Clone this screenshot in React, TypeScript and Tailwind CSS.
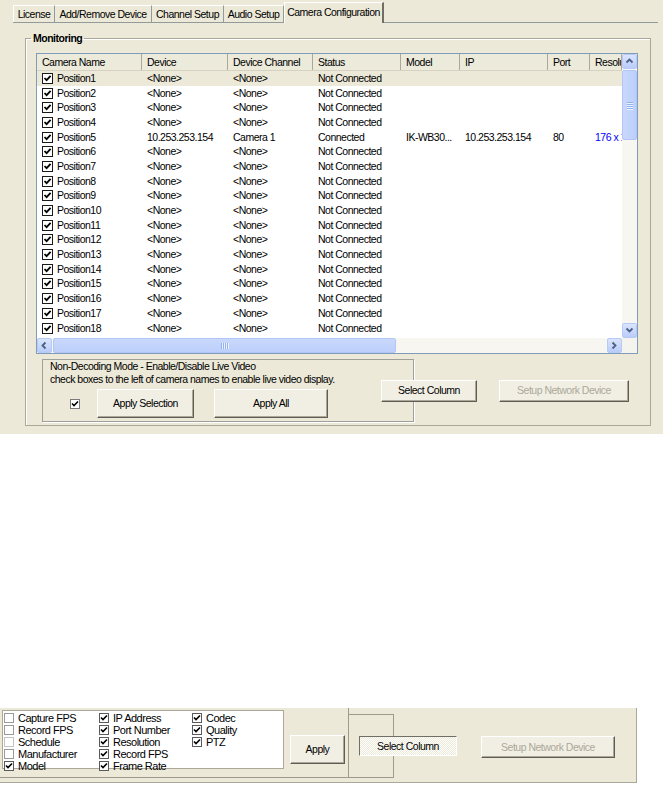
import React from 'react'

type Row = {
  name: string
  device: string
  channel: string
  status: string
  model?: string
  ip?: string
  port?: string
  res?: string
}

const rows: Row[] = Array.from({ length: 18 }, (_, i) =>
  i === 4
    ? {
        name: 'Position5',
        device: '10.253.253.154',
        channel: 'Camera 1',
        status: 'Connected',
        model: 'IK-WB30...',
        ip: '10.253.253.154',
        port: '80',
        res: '176 x 144',
      }
    : { name: `Position${i + 1}`, device: '<None>', channel: '<None>', status: 'Not Connected' }
)

const cols = [
  { label: 'Camera Name', w: 'w-[105px]' },
  { label: 'Device', w: 'w-[86px]' },
  { label: 'Device Channel', w: 'w-[85px]' },
  { label: 'Status', w: 'w-[88px]' },
  { label: 'Model', w: 'w-[59px]' },
  { label: 'IP', w: 'w-[88px]' },
  { label: 'Port', w: 'w-[42px]' },
  { label: 'Resolution', w: 'w-[32px]' },
]

function Check({ size = 'list' }: { size?: 'list' | 'flat' }) {
  if (size === 'flat') {
    return (
      <span className="flex h-[10px] w-[10px] items-center justify-center border border-[#7a7a7a] bg-white">
        <svg width="8" height="8" viewBox="0 0 8 8">
          <path d="M1 3.5 L3 5.5 L7 1.5" stroke="#000" strokeWidth="1.6" fill="none" />
        </svg>
      </span>
    )
  }
  return (
    <span className="flex h-[11px] w-[11px] shrink-0 items-center justify-center border border-[#1a1a1a] bg-white">
      <svg width="9" height="9" viewBox="0 0 9 9">
        <path d="M1.5 4 L3.6 6.2 L7.6 1.8" stroke="#000" strokeWidth="1.8" fill="none" />
      </svg>
    </span>
  )
}

function Chevron({ dir }: { dir: 'up' | 'down' | 'left' | 'right' }) {
  const d = {
    up: 'M1.5 5.5 L4.5 2.5 L7.5 5.5',
    down: 'M1.5 2.5 L4.5 5.5 L7.5 2.5',
    left: 'M5.5 1.5 L2.5 4.5 L5.5 7.5',
    right: 'M2.5 1.5 L5.5 4.5 L2.5 7.5',
  }[dir]
  return (
    <svg width="9" height="9" viewBox="0 0 9 9">
      <path d={d} stroke="#4d6185" strokeWidth="1.8" fill="none" />
    </svg>
  )
}

function ArrowBtn({ dir }: { dir: 'up' | 'down' | 'left' | 'right' }) {
  return (
    <div className="flex h-[15px] w-[15px] shrink-0 items-center justify-center rounded-[2px] border border-[#b7c9f5] bg-linear-to-b from-[#dae5fe] to-[#b9ccf9]">
      <Chevron dir={dir} />
    </div>
  )
}

function Grip({ vertical }: { vertical: boolean }) {
  return (
    <div className={vertical ? 'flex flex-col gap-px' : 'flex flex-row gap-px'}>
      {[0, 1, 2, 3].map((i) => (
        <span
          key={i}
          className={
            vertical
              ? 'block h-px w-[6px] bg-[#8fb0f3] shadow-[0_1px_0_#eef3fe]'
              : 'block h-[6px] w-px bg-[#8fb0f3] shadow-[1px_0_0_#eef3fe]'
          }
        />
      ))}
    </div>
  )
}

function Btn({
  children,
  className,
  disabled,
}: {
  children: React.ReactNode
  className: string
  disabled?: boolean
}) {
  return (
    <div
      className={`flex shrink-0 items-center justify-center border border-t-white border-l-white border-r-[#5e5c53] border-b-[#5e5c53] bg-[#f1efe4] shadow-[inset_-1px_-1px_0_#aca899] ${
        disabled ? 'text-[#aca899]' : 'text-black'
      } ${className}`}
    >
      {children}
    </div>
  )
}

function Tabs() {
  const tabs = [
    { t: 'License', w: 'w-[42px]' },
    { t: 'Add/Remove Device', w: 'w-[97px]' },
    { t: 'Channel Setup', w: 'w-[72px]' },
    { t: 'Audio Setup', w: 'w-[60px]' },
  ]
  return (
    <div className="ml-[13px] flex h-[23px] w-[645px] items-end border-b border-[#919b9c]">
      {tabs.map(({ t, w }, i) => (
        <div
          key={t}
          className={`flex h-[17px] ${w} shrink-0 items-start justify-center whitespace-nowrap border-t border-r border-t-white border-r-[#919b9c] pt-[2px] ${
            i === 0 ? 'border-l border-l-white' : ''
          }`}
        >
          {t}
        </div>
      ))}
      <div className="relative z-10 -mb-px flex h-[21px] w-[100px] shrink-0 items-start justify-center whitespace-nowrap border-t border-l border-r-2 border-t-white border-l-white border-r-[#716f64] bg-[#ece9d8] pt-[3px]">
        Camera Configuration
      </div>
    </div>
  )
}

function CameraList() {
  return (
    <div className="flex h-[301px] w-[602px] flex-col border border-[#7f9db9] bg-white">
      <div className="flex h-[284px]">
        <div className="flex w-[585px] flex-col overflow-hidden">
          <div className="flex h-[17px] shrink-0 border-b border-[#d6d2c2] bg-[#ebeadb]">
            {cols.map((c) => (
              <div
                key={c.label}
                className={`${c.w} shrink-0 overflow-hidden whitespace-nowrap border-r border-[#aca899] pl-[5px] pt-[2px]`}
              >
                {c.label}
              </div>
            ))}
          </div>
          <div className="flex-1 overflow-hidden">
            {rows.map((r, i) => (
              <div
                key={r.name}
                className={`flex h-[14.7px] items-center whitespace-nowrap ${i === 0 ? 'bg-[#ece9d8]' : ''}`}
              >
                <div className="flex w-[105px] shrink-0 items-center gap-[4px] pl-[5px]">
                  <Check />
                  <span>{r.name}</span>
                </div>
                <div className="w-[86px] shrink-0 pl-[5px]">{r.device}</div>
                <div className="w-[85px] shrink-0 pl-[5px]">{r.channel}</div>
                <div className="w-[88px] shrink-0 pl-[5px]">{r.status}</div>
                <div className="w-[59px] shrink-0 pl-[5px]">{r.model}</div>
                <div className="w-[88px] shrink-0 pl-[5px]">{r.ip}</div>
                <div className="w-[42px] shrink-0 pl-[5px]">{r.port}</div>
                <div className="w-[32px] shrink-0 overflow-hidden pl-[5px] text-[#0000ff]">{r.res}</div>
              </div>
            ))}
          </div>
        </div>
        <div className="flex w-[15px] flex-col bg-[#f7f6f1]">
          <ArrowBtn dir="up" />
          <div className="mt-px flex h-[70px] items-center justify-center rounded-[2px] border border-[#b1c5f6] bg-linear-to-r from-[#c9d8fc] to-[#bccffb]">
            <Grip vertical />
          </div>
          <div className="flex-1" />
          <ArrowBtn dir="down" />
        </div>
      </div>
      <div className="flex h-[15px]">
        <div className="flex w-[585px] bg-[#f7f6f1]">
          <ArrowBtn dir="left" />
          <div className="ml-px flex w-[343px] items-center justify-center rounded-[2px] border border-[#b1c5f6] bg-linear-to-b from-[#c9d8fc] to-[#bccffb]">
            <Grip vertical={false} />
          </div>
          <div className="flex-1" />
          <ArrowBtn dir="right" />
        </div>
        <div className="w-[15px] bg-[#f4f3ee]" />
      </div>
    </div>
  )
}

function Monitoring() {
  return (
    <fieldset className="ml-[25px] mt-[9px] h-[394px] w-[626px] border border-[#aca899] shadow-[inset_1px_1px_0_#fff]">
      <legend className="ml-[5px] px-[2px] font-bold">Monitoring</legend>
      <div className="ml-[10px] mt-[8px]">
        <CameraList />
        <div className="mt-[5px] flex items-center">
          <div className="ml-[6px] h-[63px] w-[372px] shrink-0 whitespace-nowrap border border-[#a0a09a] px-[7px] shadow-[1px_1px_0_#fff]">
            <div>Non-Decoding Mode - Enable/Disable Live Video</div>
            <div>check boxes to the left of camera names to enable live video display.</div>
            <div className="mt-[3px] flex items-center">
              <div className="ml-[20px]">
                <Check size="flat" />
              </div>
              <Btn className="ml-[17px] h-[29px] w-[97px]">Apply Selection</Btn>
              <Btn className="ml-[20px] h-[29px] w-[114px]">Apply All</Btn>
            </div>
          </div>
          <Btn className="relative -ml-[33px] h-[22px] w-[96px]">Select Column</Btn>
          <Btn className="ml-[22px] h-[22px] w-[130px]" disabled>
            Setup Network Device
          </Btn>
        </div>
      </div>
    </fieldset>
  )
}

function OptCheck({ label, checked, dim }: { label: string; checked: boolean; dim?: boolean }) {
  return (
    <div className="flex h-[12px] items-center gap-[4px] whitespace-nowrap">
      <span
        className={`flex h-[10px] w-[10px] shrink-0 items-center justify-center border bg-white ${
          checked ? 'border-[#5a5a5a]' : dim ? 'border-[#c4c4c4]' : 'border-[#9a9a9a]'
        }`}
      >
        {checked && (
          <svg width="8" height="8" viewBox="0 0 8 8">
            <path d="M1 3.5 L3 5.6 L7 1.5" stroke="#000" strokeWidth="1.6" fill="none" />
          </svg>
        )}
      </span>
      <span>{label}</span>
    </div>
  )
}

function ColumnPicker() {
  const c1: [string, boolean][] = [
    ['Capture FPS', false],
    ['Record FPS', false],
    ['Schedule', false],
    ['Manufacturer', false],
    ['Model', true],
  ]
  const c2 = ['IP Address', 'Port Number', 'Resolution', 'Record FPS', 'Frame Rate']
  const c3 = ['Codec', 'Quality', 'PTZ']
  return (
    <div className="flex h-[75px] w-[637px] border-r border-b border-[#aca899] bg-[#ece9d8]">
      <div className="flex h-[70px] w-[349px] shrink-0 items-start border-r border-b border-[#9d9a8c]">
        <div className="ml-[2px] mt-[2px] flex h-[59px] w-[282px] border border-[#aca899] bg-white pt-px text-[11px] tracking-[-0.5px]">
          <div className="ml-[1px] w-[95px]">
            {c1.map(([l, c]) => (
              <OptCheck key={l} label={l} checked={c} dim={l === 'Schedule'} />
            ))}
          </div>
          <div className="w-[93px]">
            {c2.map((l) => (
              <OptCheck key={l} label={l} checked />
            ))}
          </div>
          <div>
            {c3.map((l) => (
              <OptCheck key={l} label={l} checked />
            ))}
          </div>
        </div>
        <Btn className="ml-[6px] mt-[27px] h-[29px] w-[55px]">Apply</Btn>
      </div>
      <div className="mt-[6px] flex items-start">
        <div className="h-[64px] w-[45px] shrink-0 border-t border-r border-b border-[#9d9a8c]" />
        <div className="relative -ml-[35px] mt-[22px] flex h-[20px] w-[98px] items-center justify-center border border-t-[#716f64] border-l-[#716f64] border-r-white border-b-white bg-[repeating-conic-gradient(#ffffff_0_25%,#ece9d8_0_50%)] bg-size-[2px_2px]">
          Select Column
        </div>
        <Btn className="ml-[24px] mt-[22px] h-[22px] w-[134px]" disabled>
          Setup Network Device
        </Btn>
      </div>
    </div>
  )
}

export default function App() {
  return (
    <div className="h-[785px] w-[663px] bg-white font-['Liberation_Sans',Arial,sans-serif] text-[10.5px] leading-[13px] tracking-[-0.5px] text-black">
      <div className="h-[434px] bg-[#ece9d8]">
        <Tabs />
        <Monitoring />
      </div>
      <div className="h-[274px]" />
      <ColumnPicker />
    </div>
  )
}
